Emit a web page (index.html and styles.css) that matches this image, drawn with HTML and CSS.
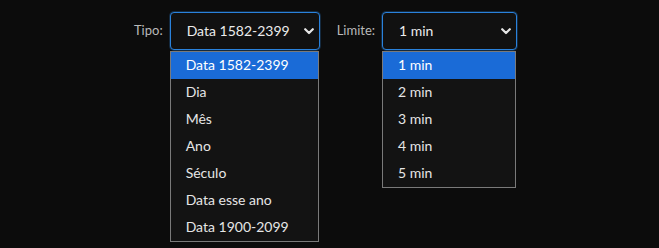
FILE: index.html
```
<!DOCTYPE html>
<html>
<head>
	<meta charset="utf-8">
	<meta name="viewport" content="width=device-width">
	<title>Filtros</title>
	<link rel="stylesheet" href="styles.css">
</head>
<body>
	<div class="bar">
		<div class="field">
			<label class="label">Tipo:</label>
			<div class="select tipo">
				<div class="value">
					<span>Data 1582-2399</span>
					<svg class="chevron" width="10" height="7" viewBox="0 0 10 7"><path d="M1.2 1.2 L5 5 L8.8 1.2" fill="none" stroke="#e6e6e6" stroke-width="2.2" stroke-linecap="round" stroke-linejoin="round"/></svg>
				</div>
				<ul class="options">
					<li class="selected">Data 1582-2399</li>
					<li>Dia</li>
					<li>Mês</li>
					<li>Ano</li>
					<li>Século</li>
					<li>Data esse ano</li>
					<li>Data 1900-2099</li>
				</ul>
			</div>
		</div>
		<div class="field">
			<label class="label">Limite:</label>
			<div class="select limite">
				<div class="value">
					<span>1 min</span>
					<svg class="chevron" width="10" height="7" viewBox="0 0 10 7"><path d="M1.2 1.2 L5 5 L8.8 1.2" fill="none" stroke="#e6e6e6" stroke-width="2.2" stroke-linecap="round" stroke-linejoin="round"/></svg>
				</div>
				<ul class="options">
					<li class="selected">1 min</li>
					<li>2 min</li>
					<li>3 min</li>
					<li>4 min</li>
					<li>5 min</li>
				</ul>
			</div>
		</div>
	</div>
</body>
</html>
```

FILE: styles.css
```
* {
	box-sizing: border-box;
	font-family: Lato, "Open Sans", sans-serif;
}

html, body {
	background: #0c0c0c;
	height: 100%;
	margin: 0;
}

.bar {
	display: flex;
	gap: 17px;
	justify-content: center;
	padding: 12px 8px 0 0;
}

.field {
	align-items: center;
	display: flex;
	gap: 7px;
	height: 38px;
}

.label {
	color: #b9b9b9;
	font-size: 13px;
	padding-bottom: 2px;
}

.select {
	height: 38px;
	position: relative;
}
.tipo { width: 150px; }
.limite { width: 135px; }

.value {
	align-items: center;
	background: #111111;
	border: 1px solid #2a82dc;
	border-radius: 4px;
	box-shadow: 0 0 0 1px rgba(42, 130, 220, 0.25);
	color: #ececec;
	display: flex;
	font-size: 14px;
	height: 38px;
	justify-content: space-between;
	padding: 0 5px 2px 16px;
}

.chevron {
	margin-top: 2px;
}

.options {
	background: #131313;
	border: 1px solid #7a7a7a;
	left: 0;
	list-style: none;
	margin: 0;
	padding: 0;
	position: absolute;
	right: 1px;
	top: 39px;
}
.options li {
	color: #e6e6e6;
	font-size: 14px;
	height: 27px;
	line-height: 25px;
	padding-left: 15px;
}
.options li.selected {
	background: #1a6bd7;
	color: #ffffff;
}
```
